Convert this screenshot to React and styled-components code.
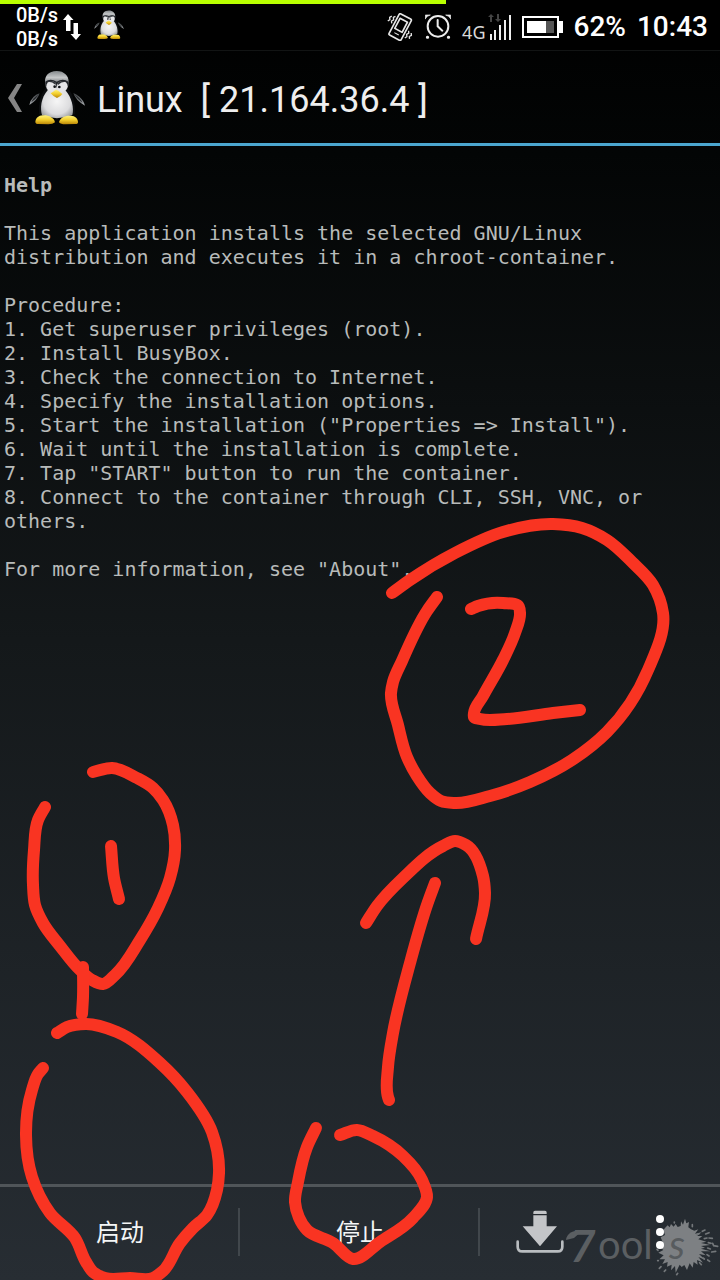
import React from "react";
import styled, { createGlobalStyle } from "styled-components";

const GlobalStyle = createGlobalStyle`
  *, *::before, *::after { box-sizing: border-box; }
  body { margin: 0; background: #000; }
`;

const Screen = styled.div`
  position: relative;
  display: flex;
  flex-direction: column;
  min-height: 100vh;
  overflow: hidden;
  color: #fff;
  font-family: Roboto, "Noto Sans CJK SC", sans-serif;
  background: linear-gradient(#000 0%, #030505 12%, #14181a 50%, #272d33 100%);
`;

const ProgressTrack = styled.div`
  height: 4px;
  background: #000;
`;

const ProgressFill = styled.div`
  height: 100%;
  background: #b9ff00;
`;

const StatusBar = styled.div`
  display: flex;
  align-items: center;
  justify-content: space-between;
  height: 47px;
  padding: 0 12px 0 16px;
  background: #000;
  border-bottom: 1px solid #121414;
`;

const StatusGroup = styled.div`
  display: flex;
  align-items: center;
  gap: ${(p) => p.$gap}px;
`;

const Speed = styled.div`
  width: 42px;
  font-size: 20px;
  font-weight: 500;
  line-height: 24px;
`;

const Notifications = styled.div`
  display: flex;
  padding: 0 0 4px 8px;
`;

const StatusText = styled.span`
  font-size: 28px;
  font-weight: 500;
  line-height: 32px;
`;

const Network = styled.div`
  display: flex;
  align-items: flex-end;
  color: #d8d8d8;
  font: 18px/18px "Noto Sans", sans-serif;
`;

const Header = styled.header`
  display: flex;
  align-items: center;
  height: 95px;
  padding: 2px 0 0 8px;
  border-bottom: 3px solid #4ba6cf;
`;

const BackButton = styled.button`
  display: flex;
  align-items: center;
  gap: 7px;
  padding: 0;
  border: 0;
  background: none;
`;

const Title = styled.h1`
  margin: 0 0 0 12px;
  padding-top: 4px;
  color: #eee;
  font-size: 36px;
  font-weight: 400;
  line-height: 44px;
  white-space: pre;
`;

const Console = styled.main`
  flex: 1;
  padding: 27px 4px;
  color: #b8bbba;
  font: 20px/24px "DejaVu Sans Mono", monospace;
`;

const HelpTitle = styled.h2`
  margin: 0 0 24px;
  font-size: 20px;
  font-weight: 700;
  line-height: 24px;
`;

const Paragraph = styled.p`
  margin: 0 0 24px;
  max-width: 648px;
`;

const Steps = styled.ol`
  margin: -24px 0 24px;
  padding: 0;
  max-width: 648px;
  list-style: none;
`;

const ActionBar = styled.footer`
  position: relative;
  display: flex;
  height: 96px;
  border-top: 3px solid #505559;
`;

const Action = styled.button`
  position: relative;
  flex: ${(p) => p.$span} 1 0;
  display: flex;
  align-items: center;
  justify-content: center;
  padding: 0 0 6px;
  border: 0;
  background: none;
  color: #f4f6f6;
  font: 24px/32px "Noto Sans CJK SC", sans-serif;
`;

const Divider = styled.span`
  position: absolute;
  right: 0;
  top: 21px;
  width: 2px;
  height: 48px;
  background: #41474c;
`;

const Watermark = styled.svg`
  position: absolute;
  right: 0;
  bottom: 0;
  pointer-events: none;
`;

const Annotations = styled.svg`
  position: absolute;
  inset: 0;
  width: 100%;
  height: 100%;
  pointer-events: none;
`;

function Penguin({ size, id }) {
  return (
    <svg width={size} height={size} viewBox="88 30 168 166" aria-hidden="true">
      <defs>
        <linearGradient id={id + "head"} x1="0" y1="0" x2="0" y2="1">
          <stop offset="0" stopColor="#85898c" />
          <stop offset=".3" stopColor="#c6c8c9" />
          <stop offset=".6" stopColor="#63666a" />
          <stop offset="1" stopColor="#15171a" />
        </linearGradient>
        <radialGradient id={id + "body"} cx=".5" cy=".45" r=".6">
          <stop offset="0" stopColor="#f6f6f6" />
          <stop offset=".7" stopColor="#dcdcde" />
          <stop offset="1" stopColor="#a2a4a7" />
        </radialGradient>
        <linearGradient id={id + "foot"} x1="0" y1="0" x2="0" y2="1">
          <stop offset="0" stopColor="#fff27a" />
          <stop offset=".5" stopColor="#f2cd2b" />
          <stop offset="1" stopColor="#b98407" />
        </linearGradient>
        <linearGradient id={id + "wing"} x1="0" y1="0" x2="0" y2="1">
          <stop offset="0" stopColor="#3b3e41" />
          <stop offset="1" stopColor="#aaaeb1" />
        </linearGradient>
      </defs>
      <path d="M120 99 Q114 119 89 134 Q91 120 102 109 Q110 101 120 99Z" fill={`url(#${id}wing)`} />
      <path d="M117 103 Q108 116 95 126 Q99 113 117 103Z" fill="#24272a" />
      <path d="M221 98 Q227 119 256 136 Q252 120 239 109 Q230 101 221 98Z" fill={`url(#${id}wing)`} />
      <path d="M225 103 Q234 116 248 127 Q243 113 225 103Z" fill="#24272a" />
      <path d="M137 84 Q114 115 118 162 L226 162 Q230 115 205 84Z" fill="#0b0d0f" />
      <path d="M171 32 C146 32 135 48 136 65 C137 87 144 98 171 98 C198 98 207 86 207 64 C207 47 194 32 171 32Z" fill={`url(#${id}head)`} />
      <path d="M137 64 Q152 53 171 64 Q190 53 206 64 L207 76 Q197 92 171 92 Q147 92 138 77Z" fill="#22252a" />
      <path d="M145 88 C123 113 121 144 127 164 Q171 184 218 164 C224 143 216 110 196 88 Q171 74 145 88Z" fill={`url(#${id}body)`} />
      <ellipse cx="155" cy="78" rx="15" ry="16" fill="#e6e6e8" />
      <ellipse cx="188" cy="78" rx="16" ry="16" fill="#e6e6e8" />
      <path d="M140 65 Q156 62 168 74 L168 67 Q154 57 140 65Z M204 65 Q187 62 175 74 L175 67 Q188 57 204 65Z" fill="#303338" />
      <circle cx="165" cy="79" r="4" fill="#101216" />
      <circle cx="179" cy="80" r="4" fill="#101216" />
      <path d="M168 88 Q174 88 188 101 Q183 109 172 113 Q158 106 153 99 Q162 93 168 88Z" fill={`url(#${id}foot)`} />
      <path d="M107 184 C110 168 122 165 133 165 C148 165 164 173 166 186 Q160 192 146 192 L116 191 Q107 191 107 184Z" fill={`url(#${id}foot)`} />
      <path d="M235 184 C233 169 222 166 209 166 C194 166 180 174 178 186 Q183 192 197 192 L227 191 Q236 191 235 184Z" fill={`url(#${id}foot)`} />
    </svg>
  );
}

function SpeedArrows() {
  return (
    <svg width="18" height="26" viewBox="0 0 18 26" fill="#fff" aria-hidden="true">
      <path d="M5 0 L10.500 6 H7.500 V17 H3 V6 H0Z" />
      <path d="M13 26 L7.500 20 H10.500 V9 H15 V20 H18Z" />
    </svg>
  );
}

function VibrateIcon() {
  return (
    <svg width="28" height="28" viewBox="0 0 84 84" fill="none" stroke="#e6e6e6" strokeWidth="5" strokeLinejoin="round" aria-hidden="true">
      <g transform="rotate(28 42 42)">
        <rect x="22" y="6" width="41" height="72" rx="4" />
        <rect x="30" y="19" width="25" height="34" />
        <path d="M35 65 H50" strokeWidth="3" />
        <path d="M15 20 l-4 6 l4 6 l-4 6 l4 6 M5 25 l-4 6 l4 6 l-4 6 M70 40 l4 6 l-4 6 l4 6 l-4 6 M80 42 l4 6 l-4 6 l4 6" strokeWidth="4" />
      </g>
    </svg>
  );
}

function AlarmIcon() {
  return (
    <svg width="26" height="26" viewBox="0 0 78 78" fill="none" stroke="#ececec" strokeWidth="6" strokeLinecap="round" aria-hidden="true">
      <circle cx="39" cy="37" r="31" />
      <path d="M38 18 V37 L52 50" />
      <path d="M1 14 V3 H16 Q6 5 1 14Z M77 14 V3 H62 Q72 5 77 14Z" fill="#ececec" strokeWidth="2" />
      <path d="M7 70 h1 M70 70 h1" strokeWidth="9" />
    </svg>
  );
}

function SignalIcon() {
  return (
    <svg width="25" height="28" viewBox="0 0 25 28" aria-hidden="true">
      <path d="M4 21 h2 v6 h-2Z M8 17 h2 v10 h-2Z M13 12 h2 v15 h-2Z M18 7 h2 v20 h-2Z M23 2 h2 v25 h-2Z" fill="#eee" />
      <path d="M5 1 l3 3 h-2 v5 h-2 v-5 h-2Z M12 9 l-3 -3 h2 v-5 h2 v5 h2Z" fill="#444" />
    </svg>
  );
}

function BatteryIcon() {
  return (
    <svg width="41" height="22" viewBox="0 0 41 22" aria-hidden="true">
      <rect x="1" y="1" width="35" height="20" fill="none" stroke="#fff" strokeWidth="2" />
      <rect x="37" y="5" width="4" height="12" fill="#fff" />
      <rect x="5" y="5" width="19" height="12" fill="#fff" />
      <rect x="24" y="5" width="8" height="12" fill="#555" />
    </svg>
  );
}

function BackChevron() {
  return (
    <svg width="14" height="28" viewBox="0 0 14 28" aria-hidden="true">
      <path d="M9 0 H14 L6 14 L14 28 H9 L0 14Z" fill="#858585" />
    </svg>
  );
}

function InstallIcon() {
  return (
    <svg width="48" height="44" viewBox="0 0 144 132" aria-hidden="true">
      <path d="M52 10 q0 -5 5 -5 h30 q5 0 5 5 v5 H52Z M52 19 H92 V52 H123 L72 112 L20 52 H52Z" fill="#c3c5c8" />
      <path d="M5 98 V113 Q5 127 19 127 H125 Q139 127 139 113 V98" fill="none" stroke="#b9bdc0" strokeWidth="8" strokeLinecap="round" />
    </svg>
  );
}

function MoreIcon() {
  return (
    <svg width="8" height="36" viewBox="0 -2 8 36" fill="#fff" aria-hidden="true">
      <circle cx="4" cy="4" r="4" />
      <circle cx="4" cy="17" r="4" />
      <circle cx="4" cy="30" r="4" />
    </svg>
  );
}

function ToolsWatermark() {
  return (
    <Watermark width="156" height="66" viewBox="564 1214 156 66" aria-label="Tools">
      <g transform="translate(645 1210) scale(.3333)">
        <path
          fill="#7d8083"
          d="M62 52 L68 46 L74 52 L78 42 L86 50 L92 42 L98 51 L107 48 L108 34 L114 44 L120 26 L124 40 L132 36 L130 52 L138 58 L148 62 L160 58 L150 71 L170 67 L156 78 L172 78 L160 88 L184 95 L168 99 L196 105 L168 108 L180 113 L168 116 L196 124 L168 124 L182 136 L162 132 L180 149 L160 141 L174 158 L156 150 L158 164 L146 156 L143 173 L134 160 L126 180 L118 165 L110 171 L104 164 L92 188 L90 168 L78 181 L80 164 L66 170 L68 156 L52 162 L60 148 L43 148 L56 136 L40 128 L55 120 L42 108 L54 98 L47 82 L60 75 L55 60Z"
        />
        <path
          fill="none"
          stroke="#73777a"
          strokeWidth="5"
          strokeLinecap="round"
          d="M172 64 l8 -4 M182 72 l10 -4 M178 86 l8 -2 M192 84 l10 1 M190 98 l8 2 M203 100 l3 7 l12 2 M188 114 l8 3 M200 126 l12 -2 M186 134 l6 4 M188 150 l6 4 M174 144 l4 3 M164 158 l5 6 M142 44 v6 M88 36 v3 M48 170 l-5 5 M62 180 l-4 4 M38 152 h2 M36 118 l3 3 M156 74 l6 -3 M98 190 l-3 4"
        />
      </g>
      <path d="M566 1240 Q567 1230 583 1230 L574 1238 Z" fill="#5b5f62" />
      <text x="570" y="1262" fill="#5b5f62" fontFamily="Lato, sans-serif" fontSize="44" fontWeight="700" fontStyle="italic">7</text>
      <text x="598" y="1259" fill="#5b5f62" fontFamily="Lato, sans-serif" fontSize="40" fontWeight="400">ool</text>
      <text x="669" y="1259" fill="#575b5e" fontFamily="Lato, sans-serif" fontSize="40" fontWeight="400" fontStyle="italic">s</text>
    </Watermark>
  );
}

const STROKES = [
  // circled 2
  [[392, 593], [410, 580], [455, 553], [503, 532], [553, 524], [582, 528], [607, 540], [632, 562], [653, 585], [663, 613], [648, 670], [607, 732], [572, 760], [530, 782], [490, 796], [455, 803], [441, 801], [430, 793], [417, 776], [407, 757], [398, 725], [391, 693], [393, 682], [402, 661], [427, 611], [437, 597]],
  [[471, 609], [478, 606], [503, 603], [519, 607], [520, 613], [515, 633], [503, 660], [483, 696], [474, 713], [474, 717], [480, 719], [507, 719], [553, 713], [580, 710]],
  // circled 1 with its stem
  [[93, 772], [112, 768], [137, 778], [153, 788], [163, 800], [173, 825], [175, 850], [170, 878], [158, 908], [140, 940], [115, 975], [103, 984], [92, 980], [80, 970], [60, 946], [43, 923], [35, 905], [33, 885], [34, 850], [38, 820], [45, 807]],
  [[111, 846], [114, 878], [119, 899]],
  [[83, 967], [83, 997], [82, 1014]],
  // ring round the start button
  [[57, 1033], [67, 1027], [86, 1024], [117, 1032], [160, 1063], [187, 1092], [212, 1132], [219, 1173], [217, 1190], [207, 1215], [193, 1228], [180, 1243], [163, 1271], [153, 1278], [130, 1278], [105, 1278], [93, 1272], [86, 1262], [75, 1238], [50, 1213], [32, 1177], [26, 1135], [32, 1090], [38, 1074], [43, 1068]],
  // arrow
  [[366, 923], [377, 906], [403, 878], [443, 846], [455, 841], [466, 845], [483, 876], [485, 893], [476, 939]],
  [[435, 883], [428, 902], [410, 963], [393, 1033], [388, 1067], [388, 1097], [389, 1100]],
  // ring round the stop button
  [[340, 1135], [357, 1130], [373, 1136], [403, 1156], [422, 1180], [427, 1197], [413, 1218], [380, 1242], [353, 1259], [333, 1243], [307, 1230], [295, 1202], [298, 1182], [307, 1147], [316, 1128]],
];

// Tangent at b, weighted so that the nearer neighbour counts for more.
function tangent(a, b, c) {
  const before = Math.hypot(b[0] - a[0], b[1] - a[1]);
  const after = Math.hypot(c[0] - b[0], c[1] - b[1]);
  if (!before) return [(c[0] - b[0]) / after, (c[1] - b[1]) / after];
  if (!after) return [(b[0] - a[0]) / before, (b[1] - a[1]) / before];
  return [0, 1].map(
    (n) => (((b[n] - a[n]) / before) * after + ((c[n] - b[n]) / after) * before) / (before + after)
  );
}

// Smooth curve through the points, written as cubic Béziers.
function smoothPath(points) {
  const tangents = points.map((p, i) => tangent(points[i - 1] || p, p, points[i + 1] || p));
  return points.slice(1).reduce((d, c, i) => {
    const b = points[i];
    const k = Math.hypot(c[0] - b[0], c[1] - b[1]) / 3;
    const [t, u] = [tangents[i], tangents[i + 1]];
    return `${d} C${b[0] + t[0] * k} ${b[1] + t[1] * k} ${c[0] - u[0] * k} ${c[1] - u[1] * k} ${c[0]} ${c[1]}`;
  }, `M${points[0].join(" ")}`);
}

const STEPS = [
  "Get superuser privileges (root).",
  "Install BusyBox.",
  "Check the connection to Internet.",
  "Specify the installation options.",
  'Start the installation ("Properties => Install").',
  "Wait until the installation is complete.",
  'Tap "START" button to run the container.',
  "Connect to the container through CLI, SSH, VNC, or others.",
];

export default function App() {
  const battery = 62;
  return (
    <Screen>
      <GlobalStyle />
      <ProgressTrack>
        <ProgressFill style={{ width: `${battery}%` }} />
      </ProgressTrack>
      <StatusBar>
        <StatusGroup $gap={5}>
          <Speed>
            <div>0B/s</div>
            <div>0B/s</div>
          </Speed>
          <SpeedArrows />
          <Notifications>
            <Penguin size={30} id="small" />
          </Notifications>
        </StatusGroup>
        <StatusGroup $gap={11}>
          <VibrateIcon />
          <AlarmIcon />
          <Network>
            <span>4G</span>
            <SignalIcon />
          </Network>
          <BatteryIcon />
          <StatusText>{`${battery}%`}</StatusText>
          <StatusText>10:43</StatusText>
        </StatusGroup>
      </StatusBar>
      <Header>
        <BackButton aria-label="Back">
          <BackChevron />
          <Penguin size={56} id="large" />
        </BackButton>
        <Title>{"Linux  [ 21.164.36.4 ]"}</Title>
      </Header>
      <Console>
        <HelpTitle>Help</HelpTitle>
        <Paragraph>
          This application installs the selected GNU/Linux distribution and executes it in a chroot-container.
        </Paragraph>
        <Paragraph>Procedure:</Paragraph>
        <Steps>
          {STEPS.map((step, i) => (
            <li key={step}>{`${i + 1}. ${step}`}</li>
          ))}
        </Steps>
        <Paragraph>For more information, see "About".</Paragraph>
      </Console>
      <ActionBar>
        <ToolsWatermark />
        <Action $span={2}>
          启动
          <Divider />
        </Action>
        <Action $span={2}>
          停止
          <Divider />
        </Action>
        <Action $span={1} aria-label="Install">
          <InstallIcon />
        </Action>
        <Action $span={1} aria-label="More">
          <MoreIcon />
        </Action>
      </ActionBar>
      <Annotations viewBox="0 0 720 1280" fill="none" stroke="#f93422" strokeWidth="12" strokeLinecap="round" strokeLinejoin="round" aria-hidden="true">
        {STROKES.map((points, i) => (
          <path key={i} d={smoothPath(points)} />
        ))}
      </Annotations>
    </Screen>
  );
}
